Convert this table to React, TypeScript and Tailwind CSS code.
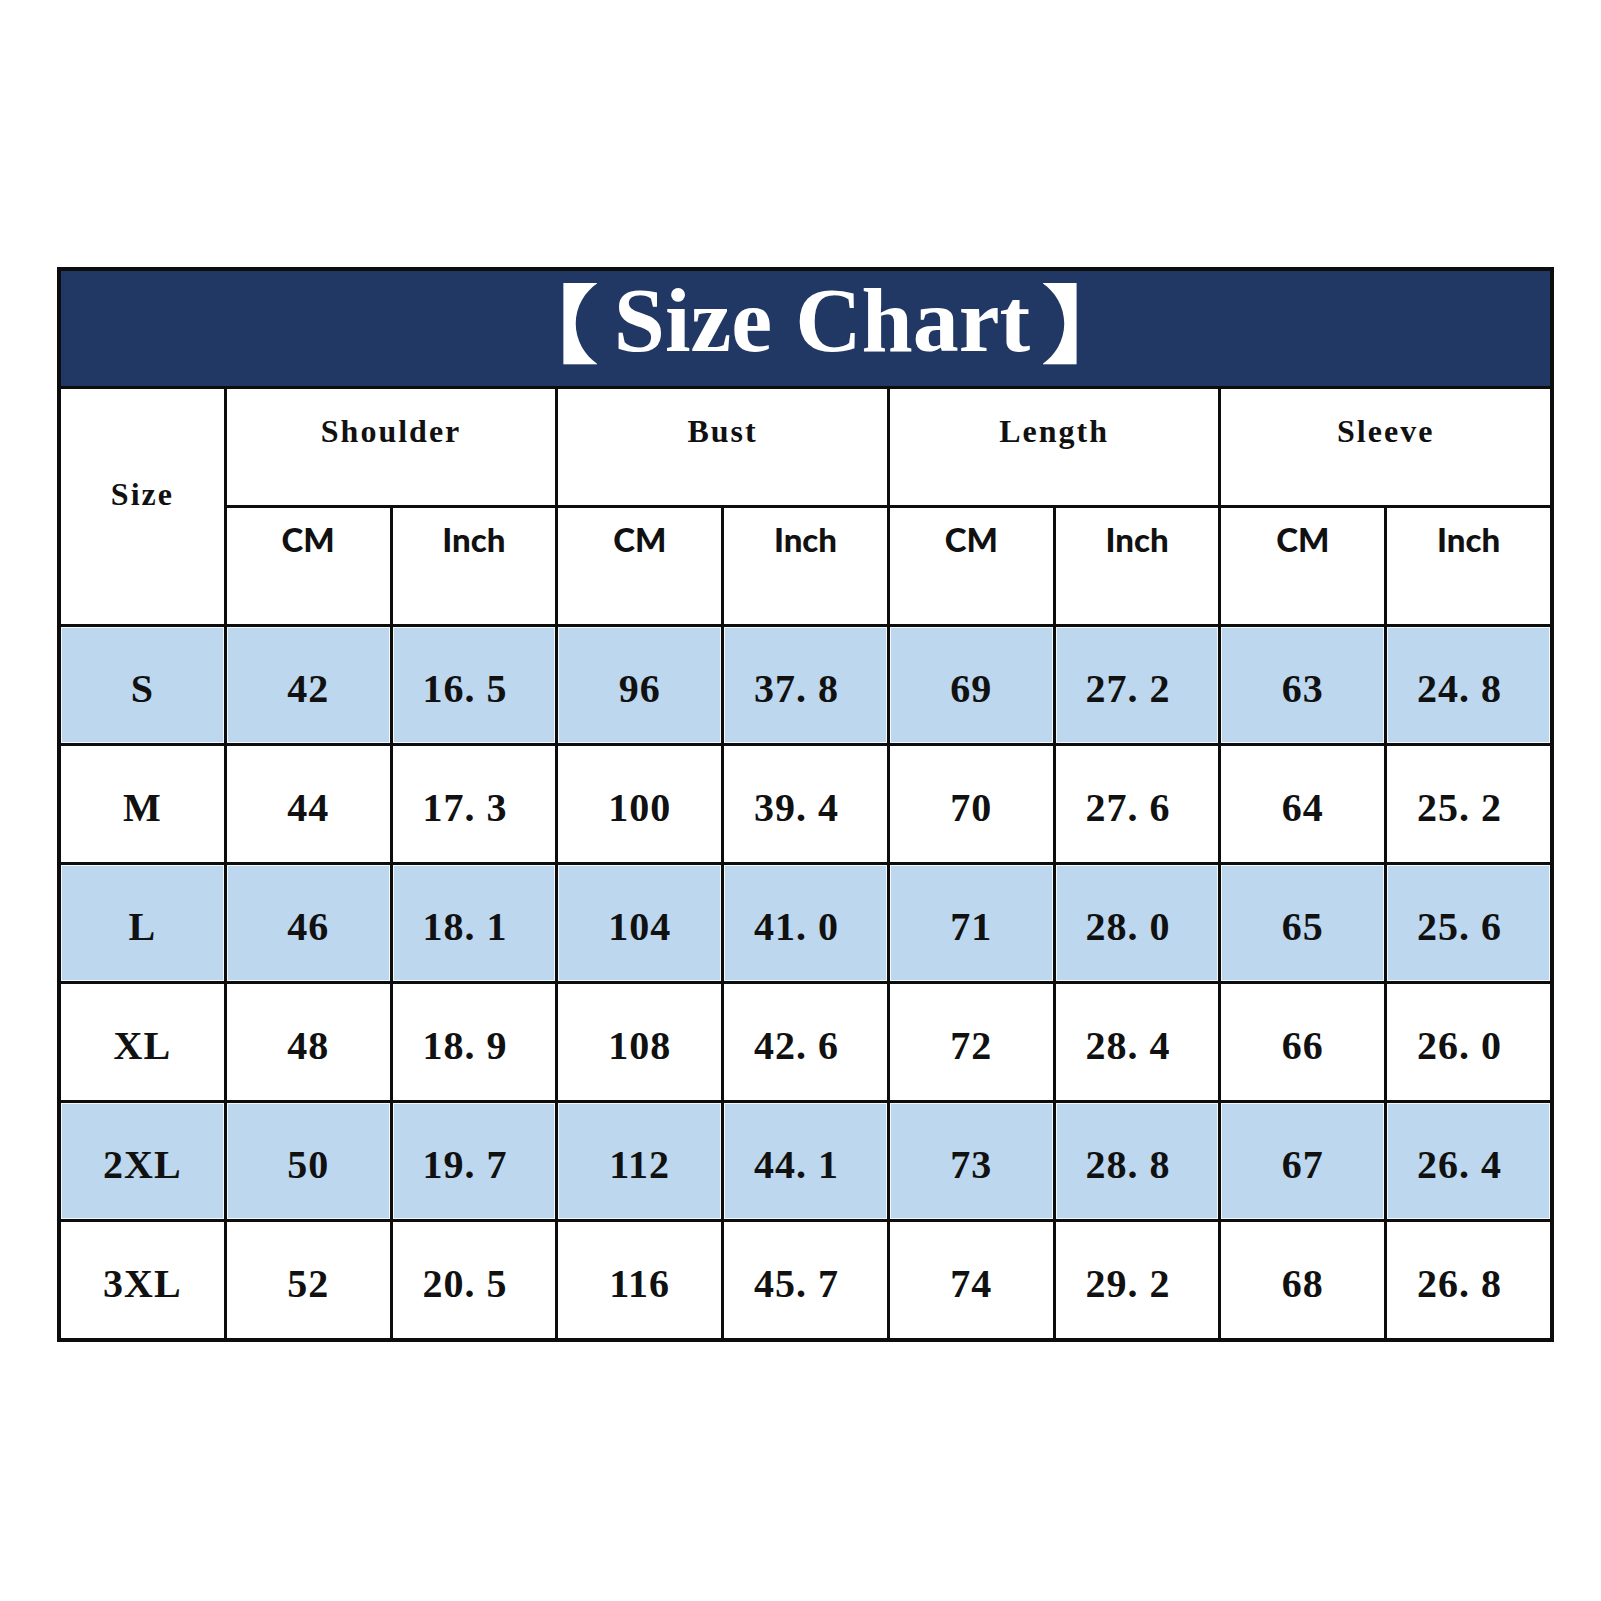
import React from "react";

const groups = ["Shoulder", "Bust", "Length", "Sleeve"];

const rows: { size: string; vals: string[] }[] = [
  { size: "S", vals: ["42", "16. 5", "96", "37. 8", "69", "27. 2", "63", "24. 8"] },
  { size: "M", vals: ["44", "17. 3", "100", "39. 4", "70", "27. 6", "64", "25. 2"] },
  { size: "L", vals: ["46", "18. 1", "104", "41. 0", "71", "28. 0", "65", "25. 6"] },
  { size: "XL", vals: ["48", "18. 9", "108", "42. 6", "72", "28. 4", "66", "26. 0"] },
  { size: "2XL", vals: ["50", "19. 7", "112", "44. 1", "73", "28. 8", "67", "26. 4"] },
  { size: "3XL", vals: ["52", "20. 5", "116", "45. 7", "74", "29. 2", "68", "26. 8"] },
];

const serif = "font-['Liberation_Serif',serif]";

export default function App() {
  return (
    <div className="w-[1601px] h-[1601px] bg-white pt-[267px] pl-[57px]">
      <div className="w-[1497px] grid grid-cols-9 grid-rows-[115px_repeat(8,116px)] gap-[3px] bg-[#0d0d0d] p-[4px]">
        {/* Title */}
        <div className="col-span-9 bg-[#223864] flex items-center justify-center pl-[29px] pb-[18px] text-white">
          <span className="inline-block w-[86px] origin-right scale-x-125 font-['Noto_Sans_CJK_SC',sans-serif] text-[86px] leading-none font-bold">【</span>
          <span className={`${serif} font-bold text-[92px] leading-none ml-[14px]`}>Size Chart</span>
          <span className="inline-block w-[86px] origin-left scale-x-125 ml-[10px] font-['Noto_Sans_CJK_SC',sans-serif] text-[86px] leading-none font-bold">】</span>
        </div>

        {/* Header row 1 */}
        <div className="row-span-2 bg-white flex items-center justify-center pb-[26px]">
          <span className={`${serif} font-bold text-[32px] leading-none tracking-[2px] text-[#111]`}>Size</span>
        </div>
        {groups.map((g) => (
          <div key={g} className="col-span-2 bg-white flex items-start justify-center pt-[26px]">
            <span className={`${serif} font-bold text-[32px] leading-none tracking-[2px] text-[#111]`}>{g}</span>
          </div>
        ))}

        {/* Header row 2 */}
        {groups.map((g) => (
          <React.Fragment key={g + "-units"}>
            <div className="bg-white flex items-start justify-center pt-[15px]">
              <span className="font-['Lato',sans-serif] font-black text-[33px] leading-none text-[#111]">CM</span>
            </div>
            <div className="bg-white flex items-start justify-center pt-[15px]">
              <span className="font-['Lato',sans-serif] font-black text-[33px] leading-none text-[#111]">Inch</span>
            </div>
          </React.Fragment>
        ))}

        {/* Data rows */}
        {rows.map((r, i) => {
          const bg =
            i % 2 === 0
              ? "bg-[#bdd7ee] shadow-[inset_0_0_0_1px_#f4f8fc]"
              : "bg-white";
          return (
            <React.Fragment key={r.size}>
              <div className={`${bg} flex items-center justify-center pt-[8px]`}>
                <span className={`${serif} font-bold text-[40px] leading-none tracking-[1px] text-[#111]`}>{r.size}</span>
              </div>
              {r.vals.map((v, j) => (
                <div
                  key={j}
                  className={`${bg} flex items-center justify-center pt-[8px] ${j % 2 === 1 ? "pr-[18px]" : ""}`}
                >
                  <span className={`${serif} font-bold text-[40px] leading-none tracking-[1px] text-[#111] whitespace-pre`}>{v}</span>
                </div>
              ))}
            </React.Fragment>
          );
        })}
      </div>
    </div>
  );
}
